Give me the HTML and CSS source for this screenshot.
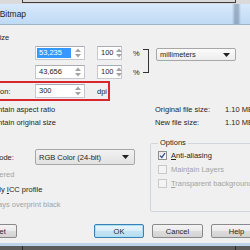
FILE: index.html
```html
<!DOCTYPE html>
<html lang="en">
<head>
  <meta charset="UTF-8" />
  <title>Resample Bitmap</title>
  <link rel="stylesheet" href="styles.css">
</head>
<body>
  <div class="desk-top"><div class="back-window"></div></div>

  <div class="dialog">
    <div class="titlebar"><span class="title">Resample Bitmap</span></div>

    <div class="content">
      <!-- Image size -->
      <div class="section-label">Image size</div>

      <div class="size-block">
        <div class="dim-rows">
          <div class="dim-row">
            <span class="field-label">Width:</span>
            <span class="spin wide">
              <span class="spin-value selected">53,235</span>
              <svg class="spin-arrows" width="10" height="12" viewBox="0 0 10 12"><path d="M5 1.5L8 5H2z M5 10.5L8 7H2z" fill="#a3a3a3"/></svg>
            </span>
            <span class="spin narrow">
              <span class="spin-value">100</span>
              <svg class="spin-arrows" width="10" height="12" viewBox="0 0 10 12"><path d="M5 1.5L8 5H2z M5 10.5L8 7H2z" fill="#a3a3a3"/></svg>
            </span>
            <span class="unit">%</span>
          </div>
          <div class="dim-row">
            <span class="field-label">Height:</span>
            <span class="spin wide">
              <span class="spin-value">43,656</span>
              <svg class="spin-arrows" width="10" height="12" viewBox="0 0 10 12"><path d="M5 1.5L8 5H2z M5 10.5L8 7H2z" fill="#a3a3a3"/></svg>
            </span>
            <span class="spin narrow">
              <span class="spin-value">100</span>
              <svg class="spin-arrows" width="10" height="12" viewBox="0 0 10 12"><path d="M5 1.5L8 5H2z M5 10.5L8 7H2z" fill="#a3a3a3"/></svg>
            </span>
            <span class="unit">%</span>
          </div>
        </div>
        <div class="link-bracket"></div>
        <div class="combo units">
          <span>millimeters</span>
          <svg class="combo-arrow" width="7" height="4" viewBox="0 0 7 4"><path d="M0 0H7L3.5 4z" fill="#222"/></svg>
        </div>
      </div>

      <div class="res-row">
        <span class="field-label">Resolution:</span>
        <span class="spin wide">
          <span class="spin-value">300</span>
          <svg class="spin-arrows" width="10" height="12" viewBox="0 0 10 12"><path d="M5 1.5L8 5H2z M5 10.5L8 7H2z" fill="#a3a3a3"/></svg>
        </span>
        <span class="unit dpi">dpi</span>
      </div>

      <div class="size-options">
        <div class="check-list">
          <label class="check"><span class="box"></span><span>Maintain aspect ratio</span></label>
          <label class="check"><span class="box"></span><span>Maintain original size</span></label>
        </div>
        <div class="file-info">
          <div class="info-row"><span class="info-label">Original file size:</span><span>1.10 MB</span></div>
          <div class="info-row"><span class="info-label">New file size:</span><span>1.10 MB</span></div>
        </div>
      </div>

      <!-- Color + options -->
      <div class="lower">
        <div class="color-col">
          <div class="mode-row">
            <span class="field-label">Color mode:</span>
            <div class="combo mode">
              <span>RGB Color (24-bit)</span>
              <svg class="combo-arrow" width="7" height="4" viewBox="0 0 7 4"><path d="M0 0H7L3.5 4z" fill="#222"/></svg>
            </div>
          </div>
          <label class="check disabled"><span class="box"></span><span>Dithered</span></label>
          <label class="check"><span class="box"></span><span>Apply <u>I</u>CC profile</span></label>
          <label class="check disabled"><span class="box"></span><span>Always overprint black</span></label>
        </div>

        <fieldset class="options">
          <legend>Options</legend>
          <label class="check">
            <span class="box checked"><svg width="7" height="7" viewBox="0 0 7 7"><path d="M1 3.6L2.8 5.4L6 1.2" fill="none" stroke="#3b4f8c" stroke-width="1.3"/></svg></span>
            <span><u>A</u>nti-aliasing</span>
          </label>
          <label class="check disabled"><span class="box"></span><span>Main<u>t</u>ain Layers</span></label>
          <label class="check disabled"><span class="box"></span><span><u>T</u>ransparent background</span></label>
        </fieldset>
      </div>

      <div class="buttons">
        <button class="btn reset">Reset</button>
        <button class="btn default">OK</button>
        <button class="btn">Cancel</button>
        <button class="btn">Help</button>
      </div>
    </div>
    <div class="frame-bottom"></div>
  </div>

  <div class="desk-bottom"><div class="back-window"></div></div>
</body>
</html>
```

FILE: styles.css
```css
* {
  box-sizing: border-box;
}

body {
  margin: 0;
  width: 250px;
  height: 250px;
  overflow: hidden;
  background: #f0f0f0;
  font-family: 'Liberation Sans', Arial, sans-serif;
  font-size: 7.5px;
  color: #262626;
}

/* window behind the dialog */
.desk-top {
  height: 4px;
  background: #dadada;
}

.desk-top .back-window {
  margin-left: 22px;
  width: 214px;
  height: 3px;
  border: 1px solid #3d3d3d;
  border-top: none;
}

.desk-bottom {
  height: 6px;
  background: #5c5c5c;
}

.desk-bottom .back-window {
  margin-left: 22px;
  width: 214px;
  height: 6px;
  border-left: 1px solid #2a2a2a;
  border-right: 1px solid #2a2a2a;
}

/* dialog */
.dialog {
  margin-left: -60px;
  width: 340px;
}

.titlebar {
  height: 21px;
  display: flex;
  align-items: center;
  padding-left: 19px;
  font-size: 8.5px;
  color: #1e1e1e;
  border-bottom: 1px solid #9fb2c6;
  background:
    linear-gradient(to right, transparent 292px, rgba(90,110,135,0.45) 295px, rgba(90,110,135,0.45) 298px, transparent 301px),
    linear-gradient(#d7e9fb, #c0daf5);
}

.content {
  padding-left: 33px;
}

.section-label {
  margin-top: 8px;
  line-height: 10px;
}

.field-label {
  width: 62px;
  flex-shrink: 0;
}

/* spin boxes */
.spin {
  display: flex;
  align-items: center;
  height: 14px;
  padding: 1px 1px 1px 3px;
  background: #fff;
  border: 1px solid #c5c8cf;
  border-top-color: #a9acb3;
}

.spin.wide {
  width: 50px;
}

.spin.narrow {
  width: 25px;
  margin-left: 12px;
}

.spin-value {
  flex: 1;
  line-height: 10px;
  white-space: nowrap;
}

.spin-value.selected {
  background: #3399ff;
  color: #fff;
  margin-left: -2px;
  padding-left: 2px;
  margin-right: 2px;
}

.spin-arrows {
  flex-shrink: 0;
}

.unit {
  margin-left: 11px;
  width: 10px;
}

.size-block {
  display: flex;
  margin-top: 3px;
}

.dim-rows {
  display: flex;
  flex-direction: column;
  gap: 5px;
}

.dim-row {
  display: flex;
  align-items: center;
}

.link-bracket {
  width: 6px;
  height: 24px;
  margin-top: 3px;
  border: 1px solid #333;
  border-left: none;
}

.combo {
  display: flex;
  align-items: center;
  justify-content: space-between;
  padding: 0 5px 0 3px;
  border: 1px solid #a7a7a7;
  border-radius: 2px;
}

.combo.units {
  width: 80px;
  height: 13px;
  margin-left: 7px;
  margin-top: 2px;
  background: linear-gradient(#fcfcfc, #ececec);
}

.combo.mode {
  width: 100px;
  height: 16px;
  background: linear-gradient(#f2f2f2, #e2e2e2);
}

/* resolution, highlighted in red */
.res-row {
  display: flex;
  align-items: center;
  width: 150px;
  height: 20px;
  margin-top: 2px;
  margin-left: -13px;
  padding-left: 11px;
  border: 2px solid #d9262c;
}

.unit.dpi {
  margin-left: 12px;
  width: auto;
}

.size-options {
  display: flex;
  margin-top: 2px;
}

.check-list {
  width: 182px;
}

.check {
  display: flex;
  align-items: center;
  height: 13px;
  gap: 4px;
  white-space: nowrap;
}

.box {
  width: 9px;
  height: 9px;
  flex-shrink: 0;
  display: flex;
  align-items: center;
  justify-content: center;
  border: 1px solid #8e8f8f;
  background: linear-gradient(135deg, #e6e6e6, #ffffff);
}

.check.disabled {
  color: #a3a3a3;
}

.check.disabled .box {
  border-color: #c9c9c9;
  background: #f4f4f4;
}

.info-row {
  display: flex;
  height: 13px;
  align-items: center;
}

.info-label {
  width: 70px;
}

/* lower half */
.lower {
  display: flex;
  margin-top: 9px;
}

.color-col {
  width: 177px;
}

.mode-row {
  display: flex;
  align-items: center;
  margin-top: 11px;
  margin-bottom: 2px;
}

.color-col .check {
  height: 14px;
  margin-bottom: 1px;
}

.options {
  margin: 0;
  padding: 0 0 19px 7px;
  width: 120px;
  border: 1px solid #d0d6db;
  border-radius: 2px;
}

.options legend {
  padding: 0 2px;
  line-height: 10px;
}

.options .check {
  height: 14px;
}

/* buttons */
.buttons {
  display: flex;
  margin-top: 12px;
  padding-bottom: 5px;
}

.btn {
  height: 14px;
  width: 51px;
  padding: 0;
  font-family: 'Liberation Sans', Arial, sans-serif;
  font-size: 7.5px;
  color: #262626;
  border: 1px solid #8a8a8a;
  border-radius: 2px;
  background: linear-gradient(#f4f4f4 0%, #ebebeb 50%, #dddddd 51%, #d2d2d2 100%);
  margin-left: 8px;
}

.btn.reset {
  width: 42px;
  margin-left: 2px;
}

.btn.default {
  width: 50px;
  margin-left: 77px;
  border-color: #3c7fb1;
  box-shadow: inset 0 0 0 1px #a9def7;
  background: linear-gradient(#e8f4fb 0%, #d9eef9 50%, #c4e4f5 51%, #b8dcf0 100%);
}

.frame-bottom {
  height: 3px;
  background: #bcd3ea;
}
```
